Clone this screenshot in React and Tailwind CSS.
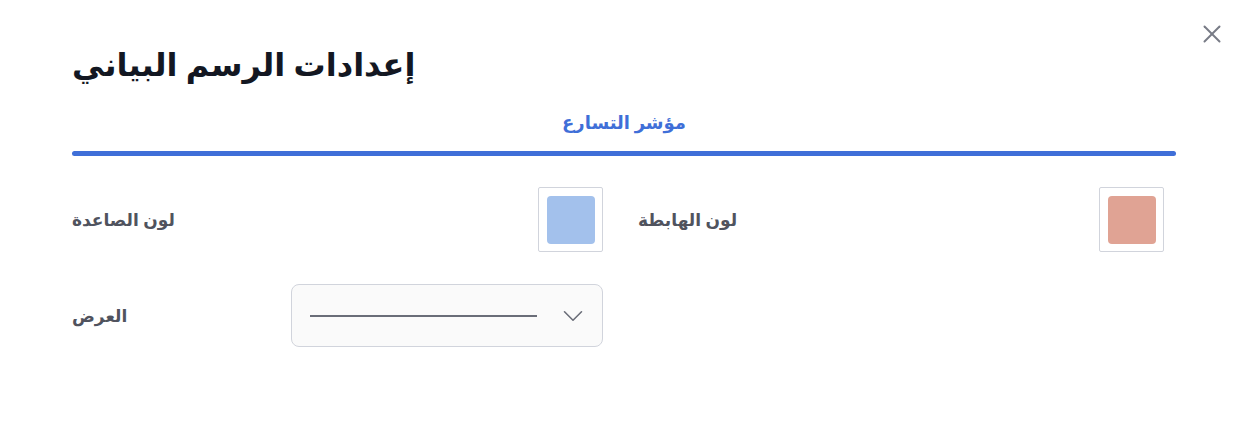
import React from 'react';
import { X, ChevronDown } from 'lucide-react';

const Swatch = ({ color }) => (
  <div className="w-[65px] h-[65px] border border-[#d1d4dc] rounded-[2px] flex items-center justify-center">
    <div className="w-[48px] h-[48px] rounded-[4px]" style={{ backgroundColor: color }} />
  </div>
);

export default function App() {
  return (
    <div className="relative w-[1248px] h-[424px] bg-white font-['Noto_Sans','DejaVu_Sans',sans-serif] text-[#131722]">
      <button className="absolute top-[19px] right-[21px] text-[#787b86]">
        <X size={30} strokeWidth={1.6} />
      </button>

      <div className="px-[72px] pt-[36px]">
        <h1 className="text-[32px] font-bold leading-[56px] text-left">
          <span dir="rtl">إعدادات الرسم البياني</span>
        </h1>

        <div className="mt-[10px] flex justify-center">
          <span dir="rtl" className="text-[18px] font-semibold text-[#3f6fd8] leading-[40px]">مؤشر التسارع</span>
        </div>
        <div className="mt-[9px] h-[5px] rounded-full bg-[#3f6fd8]" />

        <div className="mt-[31px] grid grid-cols-[531px_526px] gap-x-[35px] gap-y-[32px]">
          <div className="flex items-center justify-between">
            <span dir="rtl" className="text-[17px] font-semibold text-[#50535e]">لون الصاعدة</span>
            <Swatch color="#a3c1ec" />
          </div>
          <div className="flex items-center justify-between">
            <span dir="rtl" className="text-[17px] font-semibold text-[#50535e]">لون الهابطة</span>
            <Swatch color="#e0a394" />
          </div>
          <div className="flex items-center justify-between">
            <span dir="rtl" className="text-[17px] font-semibold text-[#50535e]">العرض</span>
            <div className="w-[312px] h-[63px] rounded-[8px] border border-[#d1d4dc] bg-[#fafafa] flex items-center pl-[18px] pr-[12px]">
              <div className="w-[227px] h-[2px] bg-[#6a6d78]" />
              <div className="flex-1" />
              <ChevronDown size={34} strokeWidth={1.1} className="text-[#6a6d78]" />
            </div>
          </div>
          <div />
        </div>
      </div>
    </div>
  );
}
